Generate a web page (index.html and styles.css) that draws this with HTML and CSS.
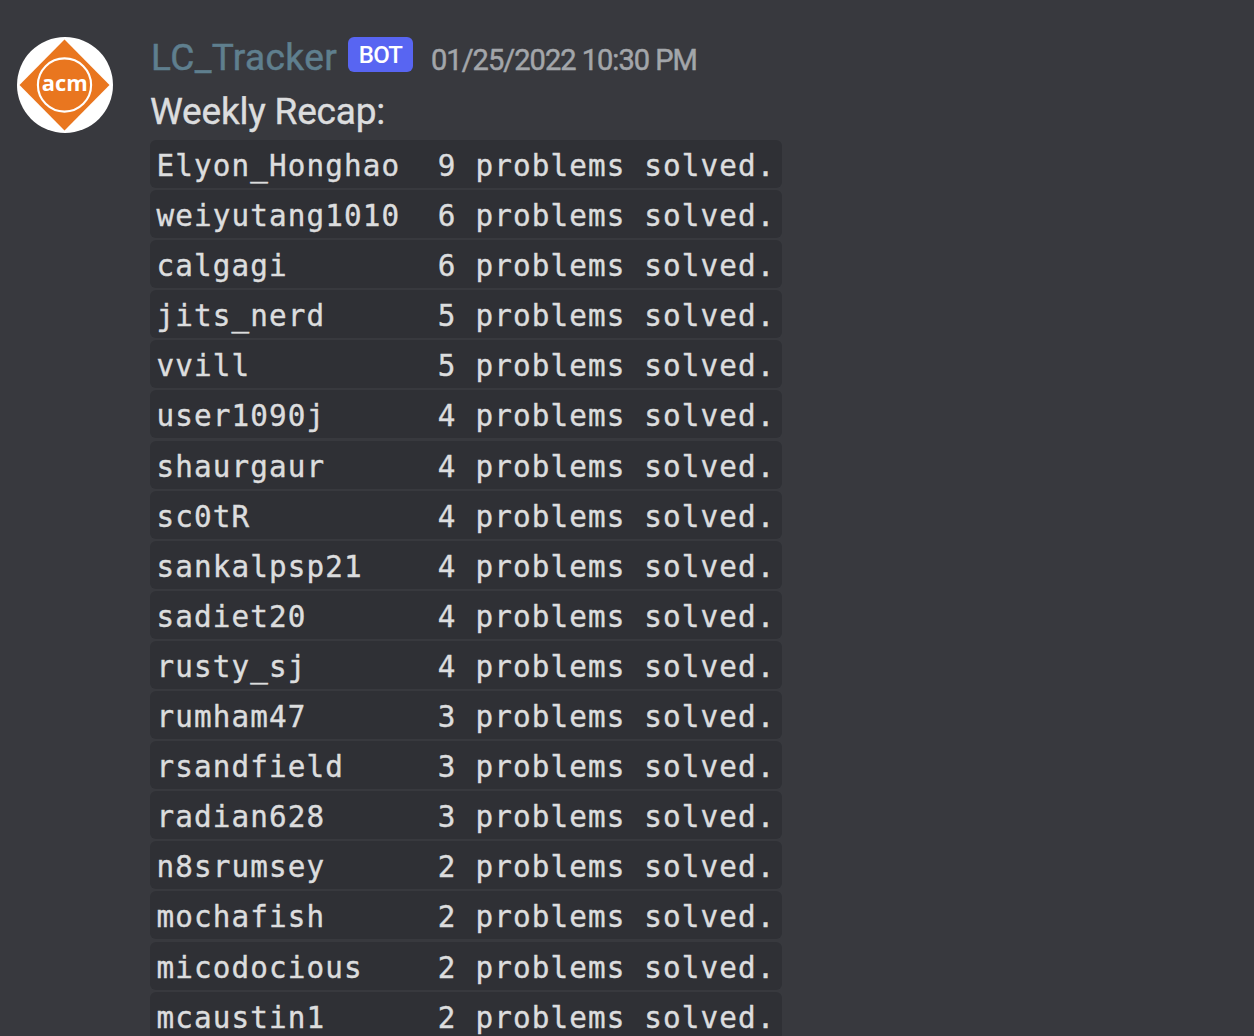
FILE: index.html
```
<!DOCTYPE html>
<html lang="en">
<head>
<meta charset="utf-8">
<title>LC_Tracker</title>
<link rel="stylesheet" href="styles.css">
</head>
<body>
<article class="message">
  <svg class="avatar" viewBox="0 0 96 96" role="img" aria-label="acm">
    <circle cx="48" cy="48" r="48" fill="#fff"/>
    <path d="M47.5 2.5 92.5 48 47.5 93.5 2.5 48Z" fill="#e9761f"/>
    <circle cx="47.5" cy="48" r="26.6" fill="none" stroke="#fff" stroke-width="2.1"/>
    <text x="47.8" y="54" class="logo-text" text-anchor="middle" textLength="46" lengthAdjust="spacingAndGlyphs">acm</text>
  </svg>
  <div class="content">
    <header class="header">
      <span class="author">LC_Tracker</span>
      <span class="badge">BOT</span>
      <time class="date">01/25/2022 10:30 PM</time>
    </header>
    <p class="title">Weekly Recap:</p>
    <div class="list">
      <code class="row">Elyon_Honghao  9 problems solved.</code>
      <code class="row">weiyutang1010  6 problems solved.</code>
      <code class="row">calgagi        6 problems solved.</code>
      <code class="row">jits_nerd      5 problems solved.</code>
      <code class="row">vvill          5 problems solved.</code>
      <code class="row">user1090j      4 problems solved.</code>
      <code class="row">shaurgaur      4 problems solved.</code>
      <code class="row">sc0tR          4 problems solved.</code>
      <code class="row">sankalpsp21    4 problems solved.</code>
      <code class="row">sadiet20       4 problems solved.</code>
      <code class="row">rusty_sj       4 problems solved.</code>
      <code class="row">rumham47       3 problems solved.</code>
      <code class="row">rsandfield     3 problems solved.</code>
      <code class="row">radian628      3 problems solved.</code>
      <code class="row">n8srumsey      2 problems solved.</code>
      <code class="row">mochafish      2 problems solved.</code>
      <code class="row">micodocious    2 problems solved.</code>
      <code class="row">mcaustin1      2 problems solved.</code>
    </div>
  </div>
</article>
</body>
</html>
```
FILE: styles.css
```
* { box-sizing: border-box; }
body {
  margin: 0;
  height: 1036px;
  overflow: hidden;
  background: #38393e;
  color: #dcddde;
  font-family: Roboto, "Noto Sans", sans-serif;
}
.message {
  display: flex;
  gap: 37px;
  padding: 37px 0 0 17px;
}
.avatar { width: 96px; height: 96px; flex: none; }
.logo-text {
  font: 700 22px "Open Sans", sans-serif;
  fill: #fff;
}
.content { flex: 1; }
.header {
  display: flex;
  align-items: flex-start;
  height: 50px;
}
.author {
  width: 198px;
  padding-left: 1px;
  font-size: 37px;
  line-height: 42px;
  letter-spacing: 0.4px;
  color: #5f7f8e;
  -webkit-text-stroke: 0.5px #5f7f8e;
}
.badge {
  width: 65px;
  height: 35px;
  border-radius: 6px;
  background: #5865f2;
  color: #fff;
  font-size: 24px;
  font-weight: 500;
  line-height: 36px;
  letter-spacing: -0.8px;
  text-align: center;
}
.date {
  margin-left: 18px;
  font-size: 29px;
  line-height: 46px;
  letter-spacing: -0.98px;
  color: #a3a6aa;
  -webkit-text-stroke: 0.5px #a3a6aa;
}
.title {
  margin: 0;
  height: 53px;
  font-size: 37px;
  line-height: 50px;
  letter-spacing: -0.2px;
  -webkit-text-stroke: 0.4px #dcddde;
}
.list {
  display: flex;
  flex-direction: column;
  align-items: flex-start;
  gap: 2.1px;
}
.row {
  width: 631.5px;
  height: 48px;
  padding-left: 6.5px;
  border-radius: 6px;
  background: #2f3035;
  font: 29.3px/52.6px "DejaVu Sans Mono", monospace;
  letter-spacing: 1.12px;
  white-space: pre;
  -webkit-text-stroke: 0.4px #dcddde;
}
```
